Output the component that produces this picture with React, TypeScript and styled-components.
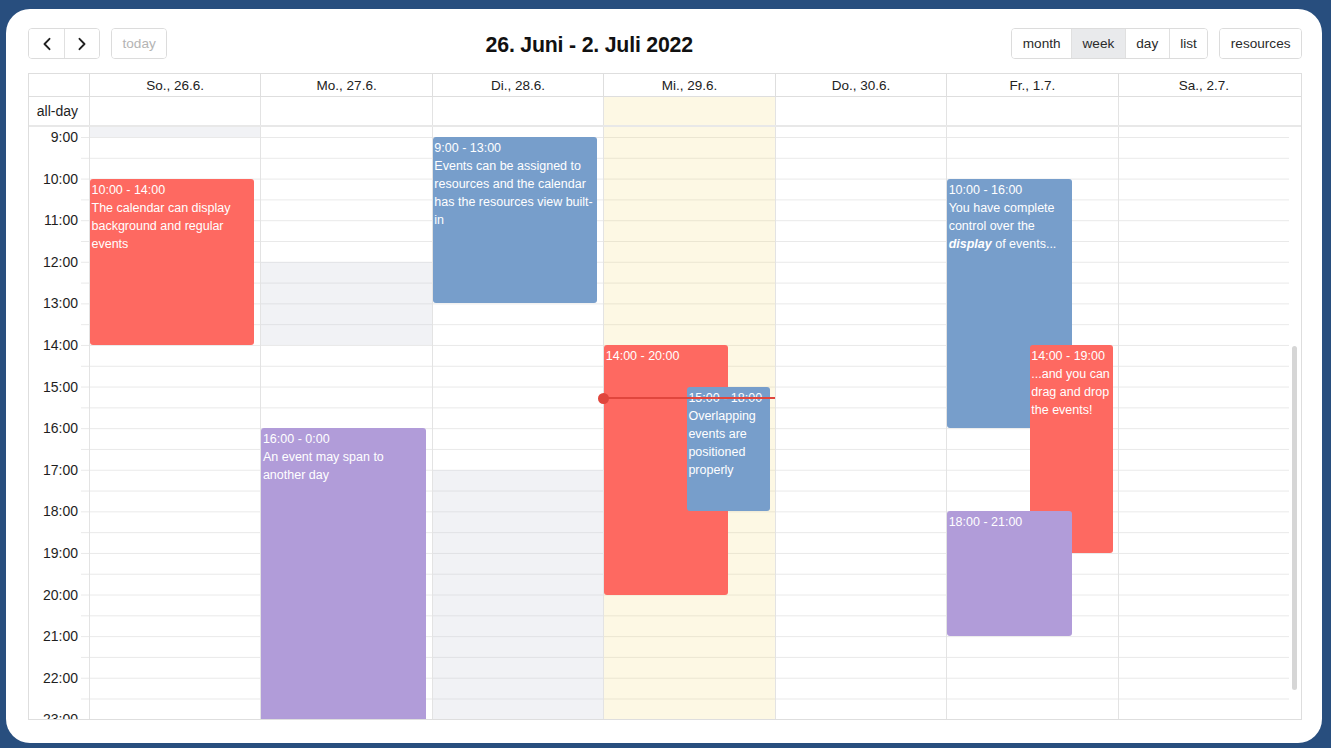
import React from "react";
import styled, { createGlobalStyle } from "styled-components";

const HOUR = 41.6;
const LEAD = 10;
const START = 9;
const COLS = "60px repeat(7, 1fr) 12px";

const timeTop = (h: number) => LEAD + (h - START) * HOUR;

const GlobalStyle = createGlobalStyle`
  html, body {
    margin: 0;
    padding: 0;
  }
  body {
    font-family: "Liberation Sans", Arial, sans-serif;
    background: #284e7e;
  }
  * {
    box-sizing: border-box;
  }
`;

const Page = styled.div`
  width: 1331px;
  height: 748px;
  padding: 9px 9px 5px 6px;
  display: flex;
`;

const Card = styled.div`
  flex: 1;
  background: #fff;
  border-radius: 24px;
  padding: 19px 20px 23px 22px;
  display: flex;
  flex-direction: column;
  gap: 14px;
  min-width: 0;
`;

const Toolbar = styled.div`
  display: flex;
  justify-content: space-between;
  align-items: center;
  height: 31px;
`;

const ToolGroup = styled.div`
  display: flex;
  gap: 11px;
`;

const ButtonGroup = styled.div`
  display: flex;
  height: 31px;
  border: 1px solid #dcdcdc;
  border-radius: 4px;
  overflow: hidden;
`;

const Button = styled.button<{ $active?: boolean; $muted?: boolean }>`
  height: 100%;
  min-width: 35px;
  padding: 0 10.5px;
  border: none;
  background: ${(p) => (p.$active ? "#e9eaec" : "#fff")};
  color: ${(p) => (p.$muted ? "#b4b4b4" : "#2a2a2a")};
  font-family: "Liberation Sans", Arial, sans-serif;
  font-size: 13.6px;
  display: flex;
  align-items: center;
  justify-content: center;

  & + & {
    border-left: 1px solid #e0e0e0;
  }
`;

const Title = styled.h2`
  margin: 0;
  font-size: 21.3px;
  font-weight: 700;
  color: #111;
  letter-spacing: -0.2px;
  padding-top: 4px;
`;

const Table = styled.div`
  flex: 1;
  min-height: 0;
  border: 1px solid #dedede;
  display: flex;
  flex-direction: column;
`;

const HeadRow = styled.div`
  display: grid;
  grid-template-columns: ${COLS};
  height: 23px;
  border-bottom: 1px solid #dedede;
`;

const HeadCell = styled.div<{ $plain?: boolean }>`
  border-left: ${(p) => (p.$plain ? "none" : "1px solid #dedede")};
  display: flex;
  align-items: center;
  justify-content: center;
  font-size: 13.5px;
  color: #222;
`;

const AllDayRow = styled.div`
  display: grid;
  grid-template-columns: ${COLS};
  height: 28px;
`;

const AxisLabel = styled.div`
  display: flex;
  align-items: center;
  justify-content: flex-end;
  padding-right: 11px;
  font-size: 14px;
  color: #1e1e1e;
`;

const DayCell = styled.div<{ $today?: boolean }>`
  border-left: 1px solid #e3e3e3;
  background: ${(p) => (p.$today ? "rgba(245, 220, 120, 0.2)" : "transparent")};
`;

const Divider = styled.div`
  height: 2px;
  background: #e8e8e8;
`;

const Body = styled.div`
  flex: 1;
  min-height: 0;
  overflow: hidden;
  display: grid;
  grid-template-columns: ${COLS};
  background-image: linear-gradient(to bottom, #e9e9e9 0 1px, transparent 1px);
  background-size: 100% ${HOUR / 2}px;
  background-position: 0 ${LEAD}px;
`;

const Axis = styled.div`
  display: flex;
  flex-direction: column;
  padding-top: ${LEAD - 9}px;
  background: linear-gradient(to right, #fff 52px, transparent 52px);
`;

const SlotLabel = styled.div`
  flex: 0 0 ${HOUR}px;
  line-height: 18px;
  text-align: right;
  padding-right: 11px;
  font-size: 14px;
  color: #1e1e1e;
`;

const DayCol = styled.div<{ $today?: boolean }>`
  position: relative;
  border-left: 1px solid #e3e3e3;
  background: ${(p) => (p.$today ? "rgba(245, 220, 120, 0.2)" : "transparent")};
`;

const Shade = styled.div`
  position: absolute;
  left: 0;
  right: 0;
  background: rgba(200, 205, 215, 0.25);
`;

const Event = styled.div<{ $color: string }>`
  position: absolute;
  border-radius: 3px;
  background: ${(p) => p.$color};
  color: #fff;
  font-size: 12.5px;
  line-height: 18px;
  padding: 2px 1px 1px 1.5px;
  overflow: hidden;
`;

const NowLine = styled.div`
  position: absolute;
  left: 0;
  right: 0;
  height: 0;
  border-top: 2px solid #e0463d;
  z-index: 5;
`;

const NowDot = styled.div`
  position: absolute;
  left: -6px;
  top: -6.5px;
  width: 11px;
  height: 11px;
  border-radius: 50%;
  background: #e0463d;
`;

const Gutter = styled.div`
  position: relative;
  background: #fff;
`;

const Thumb = styled.div`
  position: absolute;
  left: 3px;
  width: 5px;
  border-radius: 3px;
  background: #d6d6d6;
`;

const RED = "#fe6961";
const BLUE = "#779ecb";
const PURPLE = "#b19cd9";

type Ev = {
  from: number;
  to: number;
  color: string;
  left?: string;
  right?: string;
  time: string;
  text?: React.ReactNode;
};

type Day = {
  label: string;
  today?: boolean;
  shades: [number, number][];
  events: Ev[];
  now?: number;
};

const days: Day[] = [
  {
    label: "So., 26.6.",
    shades: [[7, 9]],
    events: [
      { from: 10, to: 14, color: RED, time: "10:00 - 14:00", text: "The calendar can display background and regular events" },
    ],
  },
  {
    label: "Mo., 27.6.",
    shades: [[12, 14]],
    events: [{ from: 16, to: 24, color: PURPLE, time: "16:00 - 0:00", text: "An event may span to another day" }],
  },
  {
    label: "Di., 28.6.",
    shades: [[17, 24]],
    events: [
      {
        from: 9,
        to: 13,
        color: BLUE,
        time: "9:00 - 13:00",
        text: "Events can be assigned to resources and the calendar has the resources view built-in",
      },
    ],
  },
  {
    label: "Mi., 29.6.",
    today: true,
    shades: [],
    now: 15.25,
    events: [
      { from: 14, to: 20, color: RED, right: "27.5%", time: "14:00 - 20:00" },
      { from: 15, to: 18, color: BLUE, left: "48.5%", right: "5px", time: "15:00 - 18:00", text: "Overlapping events are positioned properly" },
    ],
  },
  { label: "Do., 30.6.", shades: [], events: [] },
  {
    label: "Fr., 1.7.",
    shades: [],
    events: [
      {
        from: 10,
        to: 16,
        color: BLUE,
        right: "27%",
        time: "10:00 - 16:00",
        text: (
          <>
            You have complete control over the <b><i>display</i></b> of events...
          </>
        ),
      },
      { from: 14, to: 19, color: RED, left: "48.5%", right: "5px", time: "14:00 - 19:00", text: "...and you can drag and drop the events!" },
      { from: 18, to: 21, color: PURPLE, right: "27%", time: "18:00 - 21:00" },
    ],
  },
  { label: "Sa., 2.7.", shades: [], events: [] },
];

const hours = Array.from({ length: 15 }, (_, i) => `${i + START}:00`);

const Chevron = ({ dir }: { dir: "left" | "right" }) => (
  <svg width="10" height="14" viewBox="0 0 10 14" fill="none">
    <polyline
      points={dir === "left" ? "7.5,1.8 2.5,7 7.5,12.2" : "2.5,1.8 7.5,7 2.5,12.2"}
      stroke="#222"
      strokeWidth="1.9"
      strokeLinecap="round"
      strokeLinejoin="round"
    />
  </svg>
);

export default function App() {
  return (
    <>
      <GlobalStyle />
      <Page>
        <Card>
          <Toolbar>
            <ToolGroup>
              <ButtonGroup>
                <Button>
                  <Chevron dir="left" />
                </Button>
                <Button>
                  <Chevron dir="right" />
                </Button>
              </ButtonGroup>
              <ButtonGroup>
                <Button $muted>today</Button>
              </ButtonGroup>
            </ToolGroup>
            <Title>26. Juni - 2. Juli 2022</Title>
            <ToolGroup>
              <ButtonGroup>
                <Button>month</Button>
                <Button $active>week</Button>
                <Button>day</Button>
                <Button>list</Button>
              </ButtonGroup>
              <ButtonGroup>
                <Button>resources</Button>
              </ButtonGroup>
            </ToolGroup>
          </Toolbar>

          <Table>
            <HeadRow>
              <div />
              {days.map((d) => (
                <HeadCell key={d.label}>{d.label}</HeadCell>
              ))}
              <HeadCell $plain />
            </HeadRow>
            <AllDayRow>
              <AxisLabel>all-day</AxisLabel>
              {days.map((d) => (
                <DayCell key={d.label} $today={d.today} />
              ))}
              <div />
            </AllDayRow>
            <Divider />
            <Body>
              <Axis>
                {hours.map((h) => (
                  <SlotLabel key={h}>{h}</SlotLabel>
                ))}
              </Axis>
              {days.map((d) => (
                <DayCol key={d.label} $today={d.today}>
                  {d.shades.map(([a, b]) => (
                    <Shade
                      key={a}
                      style={{ top: Math.max(0, timeTop(a)), height: timeTop(b) - Math.max(0, timeTop(a)) }}
                    />
                  ))}
                  {d.events.map((e) => (
                    <Event
                      key={e.time}
                      $color={e.color}
                      style={{
                        top: timeTop(e.from),
                        height: timeTop(e.to) - timeTop(e.from),
                        left: e.left ?? "0px",
                        right: e.right ?? "6px",
                      }}
                    >
                      <div>{e.time}</div>
                      {e.text && <div>{e.text}</div>}
                    </Event>
                  ))}
                  {d.now !== undefined && (
                    <NowLine style={{ top: timeTop(d.now) }}>
                      <NowDot />
                    </NowLine>
                  )}
                </DayCol>
              ))}
              <Gutter>
                <Thumb style={{ top: 219, height: 344 }} />
              </Gutter>
            </Body>
          </Table>
        </Card>
      </Page>
    </>
  );
}
